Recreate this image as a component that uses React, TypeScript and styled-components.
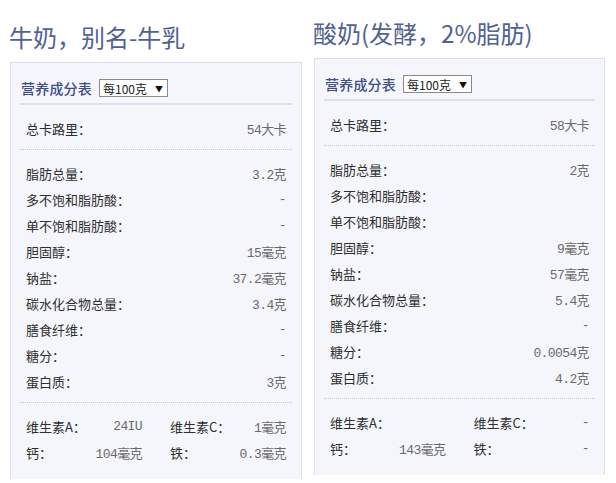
import * as React from 'react';
import styled, { createGlobalStyle } from 'styled-components';

const GlobalStyle = createGlobalStyle`
  html, body {
    margin: 0;
    padding: 0;
    background: #fff;
    height: 483px;
    overflow: hidden;
  }
  body {
    font-family: "Noto Sans CJK SC", "Noto Sans", sans-serif;
    color: #333;
  }
`;

type Row = { label: string; value?: string };
type Food = {
  title: string;
  top: number;
  main: Row[];
  vitamins: Row[];
};

const foods: Food[] = [
  {
    title: '牛奶，别名-牛乳',
    top: 21,
    main: [
      { label: '脂肪总量：', value: '3.2克' },
      { label: '多不饱和脂肪酸：', value: '-' },
      { label: '单不饱和脂肪酸：', value: '-' },
      { label: '胆固醇：', value: '15毫克' },
      { label: '钠盐：', value: '37.2毫克' },
      { label: '碳水化合物总量：', value: '3.4克' },
      { label: '膳食纤维：', value: '-' },
      { label: '糖分：', value: '-' },
      { label: '蛋白质：', value: '3克' },
    ],
    vitamins: [
      { label: '维生素A：', value: '24IU' },
      { label: '维生素C：', value: '1毫克' },
      { label: '钙：', value: '104毫克' },
      { label: '铁：', value: '0.3毫克' },
    ],
  },
  {
    title: '酸奶(发酵，2%脂肪)',
    top: 17,
    main: [
      { label: '脂肪总量：', value: '2克' },
      { label: '多不饱和脂肪酸：' },
      { label: '单不饱和脂肪酸：' },
      { label: '胆固醇：', value: '9毫克' },
      { label: '钠盐：', value: '57毫克' },
      { label: '碳水化合物总量：', value: '5.4克' },
      { label: '膳食纤维：', value: '-' },
      { label: '糖分：', value: '0.0054克' },
      { label: '蛋白质：', value: '4.2克' },
    ],
    vitamins: [
      { label: '维生素A：' },
      { label: '维生素C：', value: '-' },
      { label: '钙：', value: '143毫克' },
      { label: '铁：', value: '-' },
    ],
  },
];

const calories = ['54大卡', '58大卡'];

const Page = styled.div`
  display: grid;
  grid-template-columns: 292px 291px;
  column-gap: 12px;
  padding-left: 10px;
`;

const Column = styled.div<{ $top: number }>`
  display: flex;
  flex-direction: column;
  padding-top: ${(p) => p.$top}px;
`;

const Title = styled.h2`
  margin: 0 0 9px -1px;
  font-size: 24px;
  line-height: 32px;
  font-weight: 400;
  color: #4f6291;
  white-space: nowrap;
`;

const Panel = styled.div`
  background: #f5f6fc;
  border: 1px solid #dcdfea;
  border-bottom: none;
  padding: 0 9px 6px 9px;
`;

const Header = styled.div`
  display: flex;
  align-items: center;
  gap: 7px;
  height: 24px;
  padding: 13px 0 3px 1px;
  border-bottom: 2px solid #dcdfed;
`;

const HeaderTitle = styled.span`
  font-size: 14px;
  font-weight: 500;
  color: #3d4c8a;
  letter-spacing: 0.2px;
`;

const Select = styled.div`
  display: flex;
  align-items: center;
  justify-content: space-between;
  width: 60px;
  height: 16px;
  padding: 0 4px 0 3px;
  background: #fff;
  border: 1px solid #8a8a8a;
  font-size: 12px;
  color: #222;
`;

const Arrow = styled.span`
  font-size: 8px;
  color: #111;
`;

const Section = styled.div<{ $dotted?: boolean }>`
  padding: 10px 6px 8px 6px;
  border-top: ${(p) => (p.$dotted ? '1px dotted #c4c7d3' : 'none')};
`;

const Line = styled.div`
  display: flex;
  justify-content: space-between;
  align-items: center;
  height: 26px;
  font-size: 13px;
`;

const Label = styled.span`
  color: #2e2e2e;
  white-space: nowrap;
`;

const Value = styled.span`
  font-family: "Liberation Mono", "Noto Sans CJK SC", monospace;
  font-size: 13px;
  letter-spacing: -0.6px;
  color: #6a6a6a;
  white-space: nowrap;
`;

const VitaminGrid = styled.div`
  display: grid;
  grid-template-columns: 1fr 1fr;
  column-gap: 28px;
`;

const Item = ({ row }: { row: Row }) => (
  <Line>
    <Label>{row.label}</Label>
    <Value>{row.value}</Value>
  </Line>
);

const App: React.FC = () => (
  <>
    <GlobalStyle />
    <Page>
      {foods.map((food, i) => (
        <Column key={i} $top={food.top}>
          <Title>{food.title}</Title>
          <Panel>
            <Header>
              <HeaderTitle>营养成分表</HeaderTitle>
              <Select>
                <span>每100克</span>
                <Arrow>▼</Arrow>
              </Select>
            </Header>
            <Section>
              <Item row={{ label: '总卡路里：', value: calories[i] }} />
            </Section>
            <Section $dotted>
              {food.main.map((row) => (
                <Item key={row.label} row={row} />
              ))}
            </Section>
            <Section $dotted>
              <VitaminGrid>
                {food.vitamins.map((row) => (
                  <Item key={row.label} row={row} />
                ))}
              </VitaminGrid>
            </Section>
          </Panel>
        </Column>
      ))}
    </Page>
  </>
);

export default App;
